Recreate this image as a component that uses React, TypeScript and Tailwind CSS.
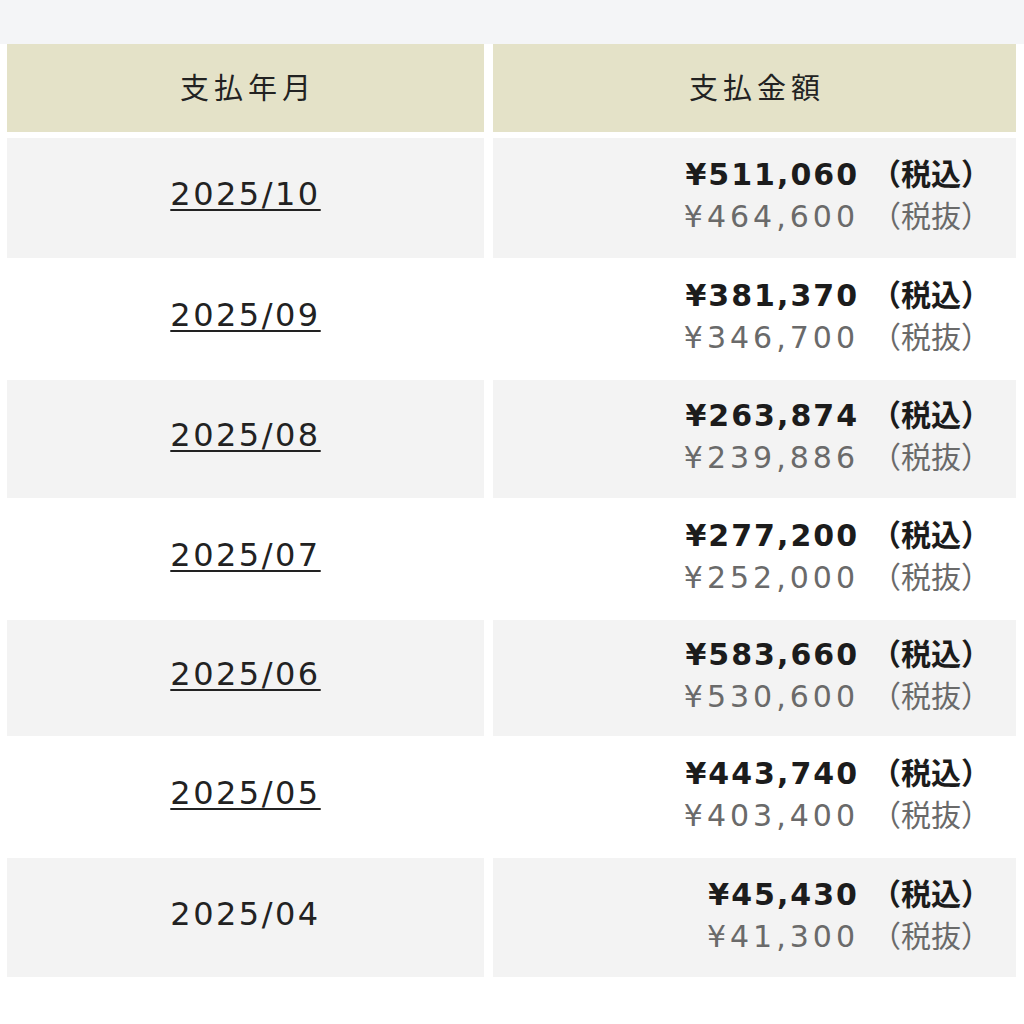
const rows = [
  { month: '2025/10', inc: '511,060', exc: '464,600', link: true, h: 'h-[120px]' },
  { month: '2025/09', inc: '381,370', exc: '346,700', link: true, h: 'h-[122px]' },
  { month: '2025/08', inc: '263,874', exc: '239,886', link: true, h: 'h-[118px]' },
  { month: '2025/07', inc: '277,200', exc: '252,000', link: true, h: 'h-[122px]' },
  { month: '2025/06', inc: '583,660', exc: '530,600', link: true, h: 'h-[116px]' },
  { month: '2025/05', inc: '443,740', exc: '403,400', link: true, h: 'h-[122px]' },
  { month: '2025/04', inc: '45,430', exc: '41,300', link: false, h: 'h-[119px]' },
];

export default function App() {
  return (
    <div
      className="w-[1024px] h-[1024px] bg-white text-[#222]"
      style={{ fontFamily: '"DejaVu Sans", "Noto Sans CJK JP", sans-serif' }}
    >
      <div className="h-[44px] bg-[#f4f5f7]" />
      <div className="pl-[7px] pr-[8px]">
        {/* Header */}
        <div className="flex gap-[9px] h-[88px]">
          <div className="w-[477px] bg-[#e4e2c8] flex items-center justify-center pt-[3px] pl-[5px] text-[29px] tracking-[5px]">
            支払年月
          </div>
          <div className="flex-1 bg-[#e4e2c8] flex items-center justify-center pt-[3px] pl-[5px] text-[29px] tracking-[5px]">
            支払金額
          </div>
        </div>
        <div className="h-[6px]" />

        {rows.map((r, i) => {
          const bg = i % 2 === 0 ? 'bg-[#f3f3f3]' : 'bg-white';
          return (
            <div key={r.month} className={`flex gap-[9px] ${r.h}`}>
              <div className={`w-[477px] ${bg} flex items-center justify-center pb-[8px]`}>
                <span
                  className={
                    'text-[32px] tracking-[2.5px] ' +
                    (r.link ? 'underline decoration-2 underline-offset-[4px]' : '')
                  }
                >
                  {r.month}
                </span>
              </div>
              <div className={`flex-1 ${bg} flex flex-col items-end justify-center pr-[25px] pb-[4px] leading-[42px] text-[30px]`}>
                <div className="font-bold text-[#1c1c1c]">
                  <span className="tracking-[2px]">¥{r.inc}</span>
                  <span className="ml-[12px]">（税込）</span>
                </div>
                <div className="text-[#6a6a6a]">
                  <span className="tracking-[4px]">¥{r.exc}</span>
                  <span className="ml-[12px]">（税抜）</span>
                </div>
              </div>
            </div>
          );
        })}
      </div>
    </div>
  );
}
